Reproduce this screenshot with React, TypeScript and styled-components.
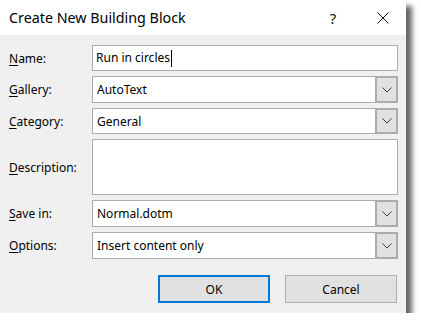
import React from 'react';
import styled, { createGlobalStyle } from 'styled-components';

const GlobalStyle = createGlobalStyle`
  html, body {
    margin: 0;
    padding: 0;
    background: #ffffff;
  }
  body {
    font-family: 'Noto Sans', 'Open Sans', sans-serif;
    -webkit-font-smoothing: antialiased;
  }
`;

interface FieldProps {
  label: string;
  accessKey: string;
  rest: string;
}

const rows = [
  { id: 'name', accessKey: 'N', rest: 'ame:', kind: 'text', value: 'Run in circles', height: 26 },
  { id: 'gallery', accessKey: 'G', rest: 'allery:', kind: 'combo', value: 'AutoText', height: 27 },
  { id: 'category', accessKey: 'C', rest: 'ategory:', kind: 'combo', value: 'General', height: 26 },
  { id: 'description', accessKey: 'D', rest: 'escription:', kind: 'area', value: '', height: 56 },
  { id: 'savein', accessKey: 'S', rest: 'ave in:', kind: 'combo', value: 'Normal.dotm', height: 27 },
  { id: 'options', accessKey: 'O', rest: 'ptions:', kind: 'combo', value: 'Insert content only', height: 27 },
];

const Chevron = () => (
  <svg width="10" height="6" viewBox="0 0 10 6">
    <path d="M0.5 0.5 L5 5 L9.5 0.5" fill="none" stroke="#3c3c3c" strokeWidth="1" />
  </svg>
);

const CloseIcon = () => (
  <svg width="12" height="12" viewBox="0 0 12 12">
    <path d="M0.5 0.5 L11.5 11.5 M11.5 0.5 L0.5 11.5" stroke="#111" strokeWidth="1" />
  </svg>
);

const Label = ({ accessKey, rest }: Omit<FieldProps, 'label'>) => (
  <LabelText>
    <u>{accessKey}</u>
    {rest}
  </LabelText>
);

const App = () => {
  return (
    <>
      <GlobalStyle />
      <Dialog>
        <TitleBar>
          <Title>Create New Building Block</Title>
          <TitleButtons>
            <HelpGlyph>?</HelpGlyph>
            <CloseBox>
              <CloseIcon />
            </CloseBox>
          </TitleButtons>
        </TitleBar>
        <Body>
          <Form>
            {rows.map((row) => (
              <React.Fragment key={row.id}>
                <Label accessKey={row.accessKey} rest={row.rest} />
                {row.kind === 'combo' ? (
                  <Combo $h={row.height}>
                    <ComboValue>{row.value}</ComboValue>
                    <DropButton>
                      <Chevron />
                    </DropButton>
                  </Combo>
                ) : (
                  <TextBox $h={row.height}>
                    {row.value}
                    {row.kind === 'text' && <Caret />}
                  </TextBox>
                )}
              </React.Fragment>
            ))}
          </Form>
          <ButtonRow>
            <DialogButton $primary>OK</DialogButton>
            <DialogButton>Cancel</DialogButton>
          </ButtonRow>
        </Body>
      </Dialog>
    </>
  );
};

const Dialog = styled.div`
  width: 406px;
  height: 313px;
  display: flex;
  flex-direction: column;
  background: #f0f0f0;
  box-shadow: 6px 6px 5px rgba(0, 0, 0, 0.6);
`;

const TitleBar = styled.div`
  height: 35px;
  flex-shrink: 0;
  background: #ffffff;
  display: flex;
  align-items: center;
  justify-content: space-between;
  padding-left: 9px;
`;

const Title = styled.h1`
  margin: 0;
  font-size: 14.3px;
  font-weight: 400;
  color: #000;
`;

const TitleButtons = styled.div`
  display: flex;
  align-items: center;
  height: 100%;
`;

const HelpGlyph = styled.span`
  font-size: 15px;
  color: #111;
  width: 46px;
  text-align: center;
  margin-right: 4px;
`;

const CloseBox = styled.span`
  width: 46px;
  height: 100%;
  display: flex;
  align-items: center;
  justify-content: center;
  padding-top: 1px;
`;

const Body = styled.div`
  flex: 1;
  padding: 10px 8px 10px 9px;
  display: flex;
  flex-direction: column;
`;

const Form = styled.div`
  display: grid;
  grid-template-columns: 83px 1fr;
  row-gap: 5px;
  align-items: center;
`;

const LabelText = styled.label`
  font-size: 12px;
  color: #000;
  u {
    text-decoration-thickness: 1px;
    text-underline-offset: 2px;
  }
`;

const TextBox = styled.div<{ $h: number }>`
  height: ${({ $h }) => $h}px;
  box-sizing: border-box;
  border: 1px solid #acacac;
  background: #ffffff;
  font-size: 12px;
  color: #000;
  padding: 3px 4px 0 3px;
  display: flex;
  align-items: flex-start;
`;

const Caret = styled.span`
  display: inline-block;
  width: 0;
  height: 17px;
  border-left: 1px solid #000;
  margin-left: 1px;
  margin-top: 1px;
`;

const Combo = styled.div<{ $h: number }>`
  height: ${({ $h }) => $h}px;
  box-sizing: border-box;
  border: 1px solid #acacac;
  background: #ffffff;
  display: flex;
  align-items: stretch;
`;

const ComboValue = styled.span`
  flex: 1;
  font-size: 12px;
  color: #000;
  padding-left: 4px;
  display: flex;
  align-items: center;
`;

const DropButton = styled.span`
  width: 19px;
  background: #e1e1e1;
  border: 1px solid #acacac;
  border-left-width: 2px;
  display: flex;
  align-items: center;
  justify-content: center;
`;

const ButtonRow = styled.div`
  margin-top: auto;
  display: flex;
  justify-content: flex-end;
  gap: 15px;
`;

const DialogButton = styled.button<{ $primary?: boolean }>`
  width: 112px;
  height: 28px;
  box-sizing: border-box;
  background: #e1e1e1;
  border: ${({ $primary }) => ($primary ? '2px solid #0078d7' : '1px solid #adadad')};
  font-family: 'Noto Sans', 'Open Sans', sans-serif;
  font-size: 12px;
  color: #000;
  padding: 0;
  margin-right: ${({ $primary }) => ($primary ? '0' : '1px')};
`;

export default App;
